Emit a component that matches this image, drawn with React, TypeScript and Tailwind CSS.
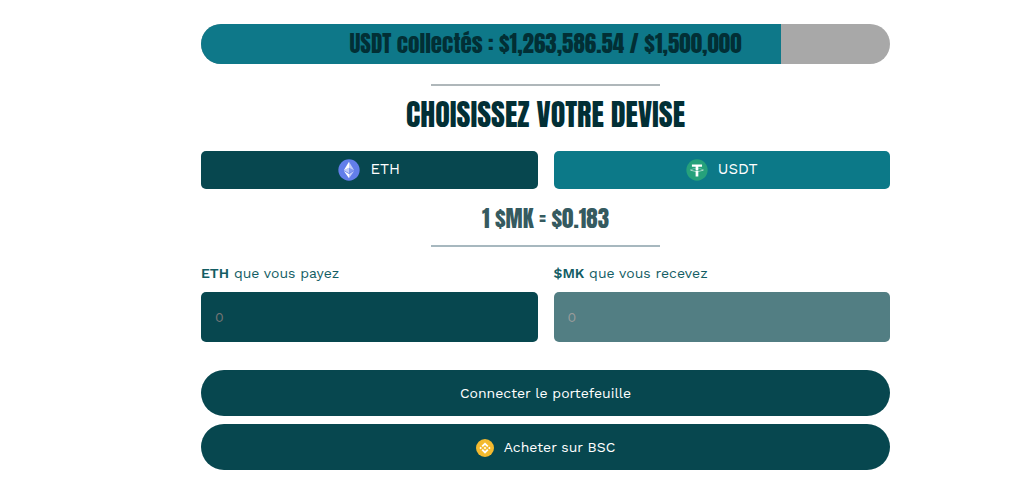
import React from "react";

const collected = 1263586.54;
const goal = 1500000;

const display = "font-[Anton,Impact,'Liberation_Sans_Narrow','Liberation_Sans',sans-serif] font-normal";

function EthIcon() {
  return (
    <svg viewBox="0 0 32 32" className="size-[22px]" aria-hidden="true">
      <circle cx="16" cy="16" r="15.5" fill="#627eea" />
      <path d="M16 4v8.87l7.5 3.35z" fill="#fff" fillOpacity=".6" />
      <path d="M16 4 8.5 16.22l7.5-3.35z" fill="#fff" />
      <path d="M16 21.97V28l7.5-10.38z" fill="#fff" fillOpacity=".6" />
      <path d="M16 28v-6.03l-7.5-4.35z" fill="#fff" />
      <path d="m16 20.57 7.5-4.35-7.5-3.35z" fill="#fff" fillOpacity=".2" />
      <path d="m8.5 16.22 7.5 4.35v-7.7z" fill="#fff" fillOpacity=".6" />
    </svg>
  );
}

function UsdtIcon() {
  return (
    <svg viewBox="0 0 32 32" className="size-[22px]" aria-hidden="true">
      <circle cx="16" cy="16" r="15.5" fill="#26a17b" />
      <path
        d="M17.92 17.38c-.11.01-.68.04-1.94.04-1.01 0-1.72-.03-1.97-.04-3.89-.17-6.79-.85-6.79-1.66s2.9-1.49 6.79-1.66v2.64c.25.02.98.06 1.99.06 1.21 0 1.81-.05 1.92-.06v-2.64c3.88.17 6.78.85 6.78 1.66s-2.9 1.48-6.78 1.66m0-3.59v-2.36h5.41V7.82H8.6v3.61h5.41v2.36c-4.4.2-7.7 1.07-7.7 2.12s3.3 1.91 7.7 2.12v7.57h3.91v-7.57c4.39-.21 7.69-1.07 7.69-2.12s-3.3-1.92-7.69-2.12"
        fill="#fff"
      />
    </svg>
  );
}

function BnbIcon() {
  return (
    <svg viewBox="0 0 32 32" className="mt-0.5 size-[18px]" aria-hidden="true">
      <circle cx="16" cy="16" r="16" fill="#f3ba2f" />
      <path
        d="M12.12 14.4 16 10.52l3.89 3.89 2.26-2.26L16 6l-6.14 6.14zM6 16l2.26-2.26L10.52 16l-2.26 2.26zm6.12 1.6L16 21.48l3.89-3.89 2.26 2.26L16 26l-6.14-6.14zM21.48 16l2.26-2.26L26 16l-2.26 2.26zm-3.19 0L16 13.71 13.71 16 16 18.3z"
        fill="#fff"
      />
    </svg>
  );
}

export default function App() {
  return (
    <main className="bg-white pt-6 pr-36 pb-7 pl-[201px] font-['Work_Sans','Noto_Sans',sans-serif] text-sm text-[#07474f]">
      <div className="grid h-10 overflow-hidden rounded-full bg-[#a8a8a8]">
        <div
          className="col-start-1 row-start-1 bg-[#0e7889]"
          style={{ width: `${(collected / goal) * 100}%` }}
        />
        <p className={`${display} col-start-1 row-start-1 text-center text-[23px] leading-10 whitespace-nowrap text-[#022f35]`}>
          USDT collectés : $1,263,586.54 / $1,500,000
        </p>
      </div>

      <hr className="mx-auto mt-5 w-1/3 border-t-2 border-[#afb7ba]" />
      <h1 className={`${display} mt-2 text-center text-[30px] leading-[42px] whitespace-nowrap text-[#022f35]`}>
        CHOISISSEZ VOTRE DEVISE
      </h1>

      <div className="mt-[15px] grid grid-cols-2 gap-4 text-[15px] text-white">
        <button type="button" className="flex h-[38px] items-center justify-center gap-2.5 rounded-[5px] bg-[#07474f]">
          <EthIcon />
          ETH
        </button>
        <button type="button" className="flex h-[38px] items-center justify-center gap-2.5 rounded-[5px] bg-[#0c7988]">
          <UsdtIcon />
          USDT
        </button>
      </div>

      <p className={`${display} mt-3.5 text-center text-[23px] leading-8 text-[#355a5f]`}>1 $MK = $0.183</p>
      <hr className="mx-auto mt-2.5 w-1/3 border-t-2 border-[#a7b8bf]" />

      <div className="mt-4 grid grid-cols-2 gap-4 text-[#135d64]">
        <div className="flex flex-col gap-[9px]">
          <label htmlFor="pay" className="leading-5">
            <strong className="font-semibold">ETH</strong> que vous payez
          </label>
          <input
            id="pay"
            placeholder="0"
            className="h-[50px] w-full rounded-[5px] bg-[#07474f] px-3.5 text-white placeholder:text-[#757575]"
          />
        </div>
        <div className="flex flex-col gap-[9px]">
          <label htmlFor="receive" className="leading-5">
            <strong className="font-semibold">$MK</strong> que vous recevez
          </label>
          <input
            id="receive"
            placeholder="0"
            readOnly
            className="h-[50px] w-full rounded-[5px] bg-[#527e83] px-3.5 text-white placeholder:text-[#999b9b]"
          />
        </div>
      </div>

      <div className="mt-7 flex flex-col gap-2 text-white">
        <button type="button" className="h-[46px] rounded-full bg-[#07474f]">
          Connecter le portefeuille
        </button>
        <button type="button" className="flex h-[46px] items-center justify-center gap-2.5 rounded-full bg-[#07474f]">
          <BnbIcon />
          Acheter sur BSC
        </button>
      </div>
    </main>
  );
}
